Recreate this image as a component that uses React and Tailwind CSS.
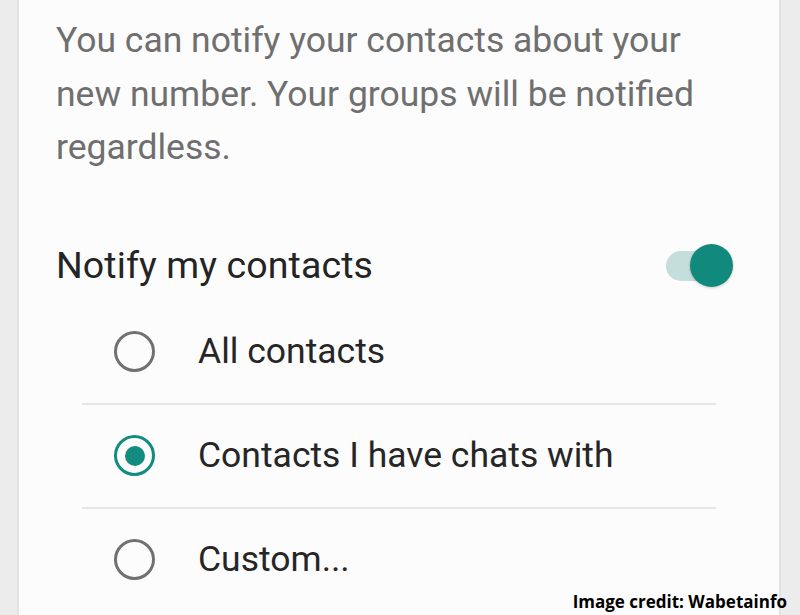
export default function App() {
  const Radio = ({ checked }) => (
    <div
      className={
        "w-[41px] h-[41px] rounded-full border-[3.5px] flex items-center justify-center shrink-0 " +
        (checked ? "border-[#128c7e]" : "border-[#717171]")
      }
    >
      {checked && <div className="w-[20px] h-[20px] rounded-full bg-[#128c7e]" />}
    </div>
  );
  const Row = ({ label, checked }) => (
    <div className="h-[102px] flex items-center pl-[32px]">
      <Radio checked={checked} />
      <span className="ml-[43px] text-[35.5px] text-[#262626] leading-none">{label}</span>
    </div>
  );
  return (
    <div
      className="w-[800px] h-[615px] flex bg-[#ececec] overflow-hidden relative"
      style={{ fontFamily: "Roboto, 'Noto Sans', sans-serif" }}
    >
      <div className="w-[19px] shrink-0 bg-[#ececec] border-r-2 border-[#e2e2e2]" />
      <div className="flex-1 bg-[#fcfcfc] flex flex-col">
        <p className="pl-[37px] pt-[14px] text-[35.5px] leading-[53.5px] text-[#6f6f6f] w-[700px]">
          You can notify your contacts about your new number. Your groups will be notified regardless.
        </p>
        <div className="mt-[61px] pl-[37px] pr-[46px] flex items-center justify-between h-[60px]">
          <span className="text-[37.5px] text-[#242424] tracking-[0.1px]">Notify my contacts</span>
          <div className="relative w-[70px] h-[44px] flex items-center">
            <div className="absolute left-[3px] w-[56px] h-[30px] rounded-full bg-[#c3dedb]" />
            <div className="absolute right-[0px] w-[43px] h-[43px] rounded-full bg-[#11897c] shadow-[0_1px_3px_rgba(0,0,0,0.2)]" />
          </div>
        </div>
        <div className="mx-[63px] mt-[5px]">
          <Row label="All contacts" />
          <div className="h-[2px] bg-[#e6e6e6]" />
          <Row label="Contacts I have chats with" checked />
          <div className="h-[2px] bg-[#e6e6e6]" />
          <Row label="Custom..." />
        </div>
      </div>
      <div className="w-[21px] shrink-0 bg-[#ececec] border-l-2 border-[#e2e2e2]" />
      <div
        className="absolute right-[13px] bottom-[5px] text-[17px] leading-none font-bold text-black"
        style={{ fontFamily: "'Open Sans', sans-serif" }}
      >
        Image credit: Wabetainfo
      </div>
    </div>
  );
}
